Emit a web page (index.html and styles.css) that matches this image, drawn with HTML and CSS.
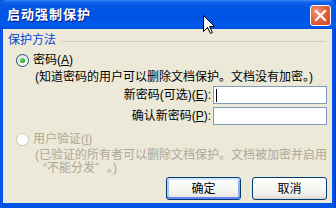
FILE: index.html
```html
<!DOCTYPE html>
<html lang="zh-CN">
<head>
<meta charset="utf-8">
<title>启动强制保护</title>
<link rel="stylesheet" href="styles.css">
</head>
<body>
<div class="window">
  <div class="titlebar">
    <span class="title">启动强制保护</span>
    <span class="close">
      <svg width="21" height="21" viewBox="0 0 21 21">
        <path d="M6 6 L15 15 M15 6 L6 15" stroke="#fff" stroke-width="2.2" stroke-linecap="square" fill="none"/>
      </svg>
    </span>
  </div>
  <div class="client">
    <div class="group-head">
      <span class="group-label">保护方法</span>
      <span class="group-line"></span>
    </div>
    <div class="option">
      <span class="radio checked"></span>
      <span class="option-text">密码(<u>A</u>)</span>
    </div>
    <div class="desc">(知道密码的用户可以删除文档保护。文档没有加密。)</div>
    <div class="fields">
      <div class="field">
        <span class="field-label">新密码(可选)(<u>E</u>):</span>
        <div class="input"><span class="caret"></span></div>
      </div>
      <div class="field">
        <span class="field-label">确认新密码(<u>P</u>):</span>
        <div class="input"></div>
      </div>
    </div>
    <div class="option disabled">
      <span class="radio"></span>
      <span class="option-text">用户验证(<u>I</u>)</span>
    </div>
    <div class="desc desc-disabled">
      <div>(已验证的所有者可以删除文档保护。文档被加密并启用</div>
      <div><span class="q-open">“</span>不能分发<span class="q-close">”</span>。)</div>
    </div>
    <div class="buttons">
      <button class="btn btn-default">确定</button>
      <button class="btn">取消</button>
    </div>
  </div>
  <svg class="cursor" width="13" height="20" viewBox="0 0 13 20">
    <path d="M0.5 0.5 V16.5 L4.5 12.5 L7.5 18.5 L9.5 17.5 L6.5 11.5 H11.5 Z" fill="#fff" stroke="#000" stroke-width="1" stroke-linejoin="miter"/>
  </svg>
</div>
</body>
</html>
```

FILE: styles.css
```css
html, body {
  margin: 0;
  padding: 0;
  width: 336px;
  height: 208px;
  overflow: hidden;
  background: #ECE9D8;
}

.window {
  position: relative;
  width: 336px;
  height: 208px;
  display: flex;
  flex-direction: column;
  background: linear-gradient(to right, #0831D9 0, #166AEE 1px, #0055E5 2px, #0055E5 calc(100% - 2px), #0031C8 100%);
  font-family: "Liberation Sans", "Noto Sans CJK SC", sans-serif;
  font-size: 12px;
  color: #000;
}

.titlebar {
  height: 29px;
  flex: none;
  display: flex;
  align-items: flex-start;
  justify-content: space-between;
  padding: 0 5px 0 7px;
  box-sizing: border-box;
  background: linear-gradient(to bottom, #3D8BF7 0, #1467EC 2px, #0458E4 5px, #0054E3 12px, #0055E6 20px, #005BEF 25px, #0052E2 28px, #0049D6 29px);
  border-radius: 7px 7px 0 0;
}

.title {
  margin-top: 7px;
  color: #fff;
  font-weight: bold;
  font-size: 13px;
  line-height: 15px;
  letter-spacing: 1px;
  text-shadow: 1px 1px 0 #0A1883;
}

.close {
  margin-top: 5px;
  width: 21px;
  height: 21px;
  box-sizing: border-box;
  border: 1px solid #fff;
  border-radius: 3px;
  background: radial-gradient(circle at 30% 30%, #F29A7A 0, #E4633F 45%, #CC4422 100%);
  display: flex;
  align-items: center;
  justify-content: center;
}

.close svg {
  display: block;
  margin: -1px;
}

.client {
  flex: 1;
  margin: 0 4px 5px 3px;
  background: #ECE9D8;
  display: flex;
  flex-direction: column;
}

.group-head {
  margin-top: 4px;
  height: 14px;
  display: flex;
  align-items: center;
  padding: 0 6px 0 5px;
}

.group-label {
  color: #0046D5;
  line-height: 14px;
}

.group-line {
  flex: 1;
  height: 1px;
  margin-left: 5px;
  margin-top: 2px;
  background: #D0D0BF;
}

.option {
  display: flex;
  align-items: center;
  height: 14px;
  padding-left: 13px;
  gap: 4px;
}

.group-head + .option {
  margin-top: 6px;
}

.option-text {
  line-height: 14px;
}

.radio {
  width: 13px;
  height: 13px;
  box-sizing: border-box;
  border-radius: 50%;
  border: 1px solid #1C5180;
  background: linear-gradient(135deg, #DCDCD7 0, #F5F5F3 60%, #FFFFFF 100%);
  display: flex;
  align-items: center;
  justify-content: center;
}

.radio.checked::after {
  content: "";
  width: 5px;
  height: 5px;
  border-radius: 50%;
  background: radial-gradient(circle at 35% 35%, #6FE36B 0, #2DAE2A 55%, #1A8A18 100%);
}

.desc {
  margin-top: 3px;
  padding-left: 32px;
  line-height: 14px;
  white-space: nowrap;
}

.fields {
  margin-top: 2px;
  display: flex;
  flex-direction: column;
  align-items: flex-end;
  gap: 3px;
  padding-right: 5px;
}

.field {
  display: flex;
  align-items: center;
  gap: 2px;
  height: 18px;
}

.field-label {
  line-height: 14px;
}

.input {
  width: 114px;
  height: 18px;
  box-sizing: border-box;
  border: 1px solid #7F9DB9;
  background: #fff;
  display: flex;
  align-items: center;
  padding-left: 2px;
}

.caret {
  width: 1px;
  height: 13px;
  background: #000;
}

.option.disabled {
  margin-top: 7px;
  color: #ACA899;
}

.option.disabled .radio {
  border-color: #CAC8BB;
  background: #fff;
}

.desc-disabled {
  margin-top: 3px;
  line-height: 13px;
  color: #ACA899;
}

.q-open {
  display: inline-block;
  width: 12px;
  text-align: right;
}

.q-close {
  display: inline-block;
  width: 12px;
  text-align: left;
}

.buttons {
  margin-top: auto;
  margin-bottom: 3px;
  display: flex;
  justify-content: flex-end;
  gap: 11px;
  padding-right: 5px;
}

.btn {
  width: 75px;
  height: 23px;
  box-sizing: border-box;
  border: 1px solid #003C74;
  border-radius: 3px;
  background: linear-gradient(to bottom, #FFFFFF 0, #F6F6F3 50%, #ECEBE6 85%, #D6D0C5 100%);
  font-family: "Liberation Sans", "Noto Sans CJK SC", sans-serif;
  font-size: 12px;
  color: #000;
  padding: 0;
  margin: 0;
  line-height: 14px;
}

.btn-default {
  box-shadow: inset 0 2px 0 #CEE7FF, inset 0 -2px 0 #6982EE, inset 2px 0 0 #B2CAF4, inset -2px 0 0 #8DAAEB;
}

.cursor {
  position: absolute;
  left: 203px;
  top: 15px;
}
```
